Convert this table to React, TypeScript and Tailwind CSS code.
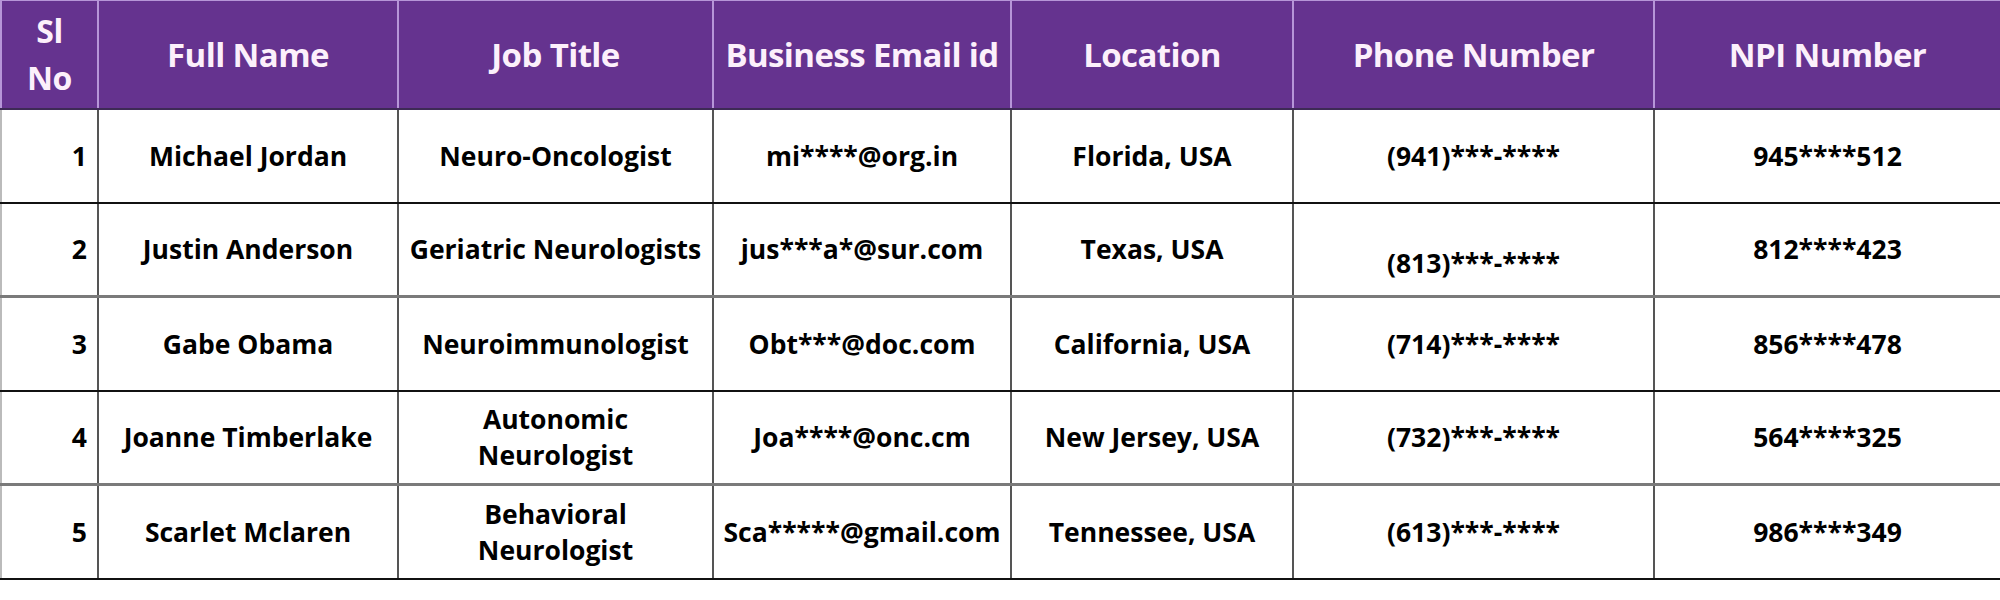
const rows = [
  { no: 1, name: "Michael Jordan", title: ["Neuro-Oncologist"], email: "mi****@org.in", location: "Florida, USA", phone: "(941)***-****", npi: "945****512" },
  { no: 2, name: "Justin Anderson", title: ["Geriatric Neurologists"], email: "jus***a*@sur.com", location: "Texas, USA", phone: "(813)***-****", npi: "812****423" },
  { no: 3, name: "Gabe Obama", title: ["Neuroimmunologist"], email: "Obt***@doc.com", location: "California, USA", phone: "(714)***-****", npi: "856****478" },
  { no: 4, name: "Joanne Timberlake", title: ["Autonomic", "Neurologist"], email: "Joa****@onc.cm", location: "New Jersey, USA", phone: "(732)***-****", npi: "564****325" },
  { no: 5, name: "Scarlet Mclaren", title: ["Behavioral", "Neurologist"], email: "Sca*****@gmail.com", location: "Tennessee, USA", phone: "(613)***-****", npi: "986****349" },
];

const headers = ["Full Name", "Job Title", "Business Email id", "Location", "Phone Number", "NPI Number"];

export default function App() {
  return (
    <div className="w-[2000px] h-[600px] bg-white font-['Open_Sans',sans-serif]">
      <table className="w-[2000px] table-fixed border-collapse">
        <colgroup>
          <col className="w-[97px]" />
          <col className="w-[300px]" />
          <col className="w-[315px]" />
          <col className="w-[298px]" />
          <col className="w-[282px]" />
          <col className="w-[361px]" />
          <col className="w-[347px]" />
        </colgroup>
        <thead>
          <tr className="h-[108px] bg-[#65338f] text-[#fcf0fb]">
            <th className="border-x-2 border-t border-b-2 border-x-[#b696d8] border-t-[#b696d8] border-b-[#3d2a55] text-[32px] font-bold leading-[47px] tracking-[-0.5px]">
              Sl
              <br />
              No
            </th>
            {headers.map((h) => (
              <th
                key={h}
                className="border-x-2 border-t border-b-2 border-x-[#b696d8] border-t-[#b696d8] border-b-[#3d2a55] text-[33px] font-bold tracking-[-0.6px] whitespace-nowrap"
              >
                {h}
              </th>
            ))}
          </tr>
        </thead>
        <tbody>
          {rows.map((r, i) => {
            // every other row line is a lighter, thicker grey
            const line = i % 2 === 0 ? "border-b-2 border-b-[#111]" : "border-b-[3px] border-b-[#7a7a7a]";
            const cell = `border-x-2 border-x-[#555] ${line} text-[26.5px] font-bold text-black text-center leading-[36px]`;
            return (
              <tr key={r.no} className="h-[94px]">
                <td className={`${cell} !text-right pr-[10px] border-l-[#bbb]`}>{r.no}</td>
                <td className={cell}>{r.name}</td>
                <td className={cell}>
                  {r.title.map((t) => (
                    <div key={t}>{t}</div>
                  ))}
                </td>
                <td className={cell}>{r.email}</td>
                <td className={cell}>{r.location}</td>
                <td className={`${cell} ${r.no === 2 ? "pt-7" : ""}`}>{r.phone}</td>
                <td className={cell}>{r.npi}</td>
              </tr>
            );
          })}
        </tbody>
      </table>
    </div>
  );
}
